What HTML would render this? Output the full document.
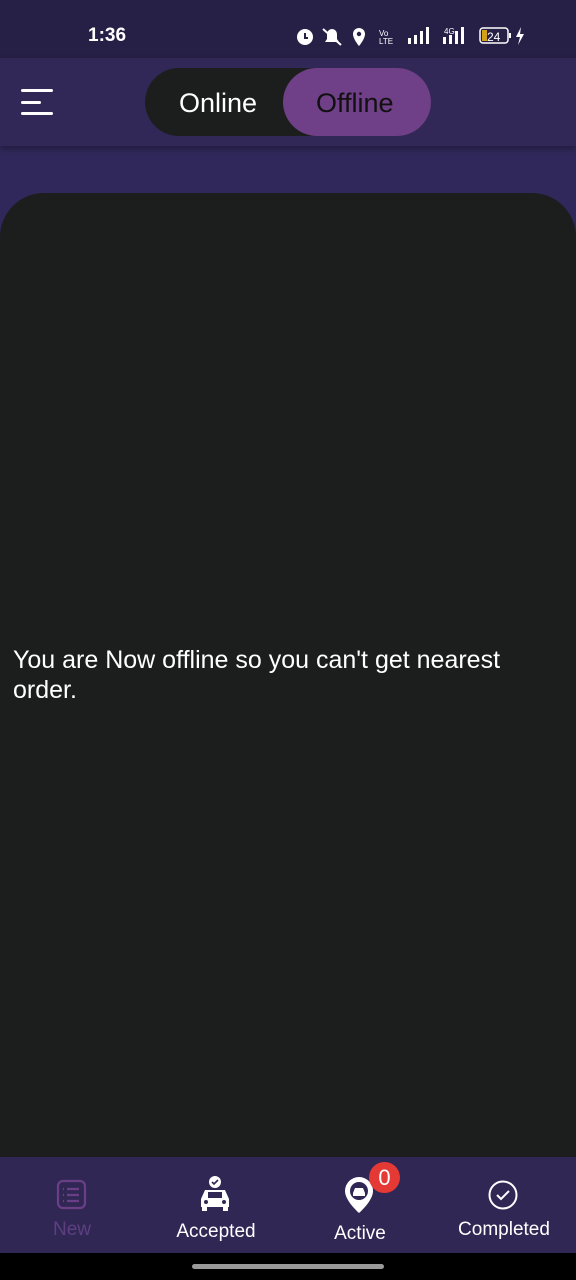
<!DOCTYPE html>
<html><head><meta charset="utf-8"><style>
*{margin:0;padding:0;box-sizing:border-box}
body{width:576px;height:1280px;background:#30285a;font-family:"Liberation Sans",Roboto,sans-serif;position:relative;overflow:hidden;color:#fff}
.sb{position:absolute;top:0;left:0;width:576px;height:58px;background:#272046}
.hd{position:absolute;top:58px;left:0;width:576px;height:88px;background:#322857;box-shadow:0 3px 6px rgba(0,0,0,.3)}
.pill{position:absolute;left:145px;top:68px;width:286px;height:68px;border-radius:34px;background:#1c1d1d}
.off{position:absolute;left:283px;top:68px;width:148px;height:68px;border-radius:34px;background:#6f3f87}
.panel{position:absolute;left:0;top:193px;width:576px;height:964px;background:#1c1d1d;border-radius:44px 44px 0 0}
.nav{position:absolute;left:0;top:1157px;width:576px;height:96px;background:#302755}
.bot{position:absolute;left:0;top:1253px;width:576px;height:27px;background:#000}
.lbl{position:absolute;font-size:19px;text-align:center;width:144px}
</style></head><body>
<div class="sb"></div>
<div style="position:absolute;left:88px;top:25px;font-size:19px;font-weight:bold">1:36</div>
<svg style="position:absolute;left:295px;top:24px" width="240" height="24" viewBox="0 0 240 24" fill="#fff">
<circle cx="10" cy="13" r="8"/><path d="M10 9v5h3" stroke="#272046" stroke-width="2" fill="none"/>
<path d="M30 18h14l-2-3v-5a5 5 0 0 0-10 0v5z"/><path d="M28 5l18 16" stroke="#fff" stroke-width="2"/>
<path d="M64 4a6 6 0 0 1 6 6c0 5-6 12-6 12s-6-7-6-12a6 6 0 0 1 6-6z"/><circle cx="64" cy="10" r="2.2" fill="#272046"/>
<text x="84" y="12" font-size="8" font-family="Liberation Sans">Vo</text><text x="84" y="20" font-size="8" font-family="Liberation Sans">LTE</text>
<rect x="113" y="14" width="3" height="6"/><rect x="119" y="11" width="3" height="9"/><rect x="125" y="7" width="3" height="13"/><rect x="131" y="3" width="3" height="17"/>
<text x="149" y="10" font-size="8" font-family="Liberation Sans">4G</text><rect x="148" y="13" width="3" height="7"/><rect x="154" y="11" width="3" height="9"/><rect x="160" y="7" width="3" height="13"/><rect x="166" y="3" width="3" height="17"/>
<rect x="185" y="4" width="28" height="15" rx="3" fill="none" stroke="#fff" stroke-width="1.5"/><rect x="187" y="6" width="5" height="11" fill="#d4a017"/><text x="192" y="17" font-size="12" font-family="Liberation Sans">24</text><rect x="214" y="9" width="2" height="5"/>
<path d="M226 3l-5 10h4l-2 8 6-11h-4z"/>
</svg>
<div class="hd"></div>
<div style="position:absolute;left:21px;top:89px;width:32px;height:3px;background:#fff;border-radius:2px"></div>
<div style="position:absolute;left:21px;top:101px;width:20px;height:3px;background:#fff;border-radius:2px"></div>
<div style="position:absolute;left:21px;top:112px;width:32px;height:3px;background:#fff;border-radius:2px"></div>
<div class="pill"></div><div class="off"></div>
<div style="position:absolute;left:179px;top:88px;font-size:27px">Online</div>
<div style="position:absolute;left:316px;top:88px;font-size:27px;color:#111">Offline</div>
<div class="panel"></div>
<div style="position:absolute;left:13px;top:645px;font-size:25px;line-height:30px;width:520px">You are Now offline so you can't get nearest order.</div>
<div class="nav"></div>
<svg style="position:absolute;left:56px;top:1179px" width="32" height="32" viewBox="0 0 32 32" fill="none" stroke="#6b3f86" stroke-width="2.2"><rect x="2" y="2" width="27" height="27" rx="5"/><path d="M11 10h12M11 16h12M11 22h12M7 10h1M7 16h1M7 22h1"/></svg>
<div class="lbl" style="left:0;top:1219px;color:#5d3f80">New</div>
<svg style="position:absolute;left:198px;top:1175px" width="34" height="38" viewBox="0 0 34 38" fill="#fff"><circle cx="17" cy="7" r="6"/><path d="M14 7l2 2 4-4" stroke="#302755" stroke-width="1.6" fill="none"/><path d="M7 15h20l4 9v8h-28v-8z"/><rect x="4" y="31" width="5" height="5"/><rect x="25" y="31" width="5" height="5"/><rect x="10" y="17" width="14" height="6" fill="#302755"/><circle cx="8" cy="27" r="2" fill="#302755"/><circle cx="26" cy="27" r="2" fill="#302755"/></svg>
<div class="lbl" style="left:144px;top:1221px">Accepted</div>
<svg style="position:absolute;left:343px;top:1175px" width="32" height="40" viewBox="0 0 32 40"><path d="M16 2a14 14 0 0 1 14 14c0 10-14 22-14 22S2 26 2 16A14 14 0 0 1 16 2z" fill="#fff"/><circle cx="16" cy="16" r="9" fill="#302755"/><path d="M10 18h12v3H10zM12 13h8l2 5H10z" fill="#fff"/></svg>
<div style="position:absolute;left:369px;top:1162px;width:31px;height:31px;border-radius:50%;background:#e53935;font-size:22px;text-align:center;line-height:31px">0</div>
<div class="lbl" style="left:288px;top:1223px">Active</div>
<svg style="position:absolute;left:487px;top:1179px" width="32" height="32" viewBox="0 0 32 32" fill="none" stroke="#fff" stroke-width="2"><circle cx="16" cy="16" r="13.5"/><path d="M10 16l4 4 8-8"/></svg>
<div class="lbl" style="left:432px;top:1219px">Completed</div>
<div class="bot"></div>
<div style="position:absolute;left:192px;top:1264px;width:192px;height:5px;border-radius:3px;background:#9a9a9a"></div>
</body></html>
